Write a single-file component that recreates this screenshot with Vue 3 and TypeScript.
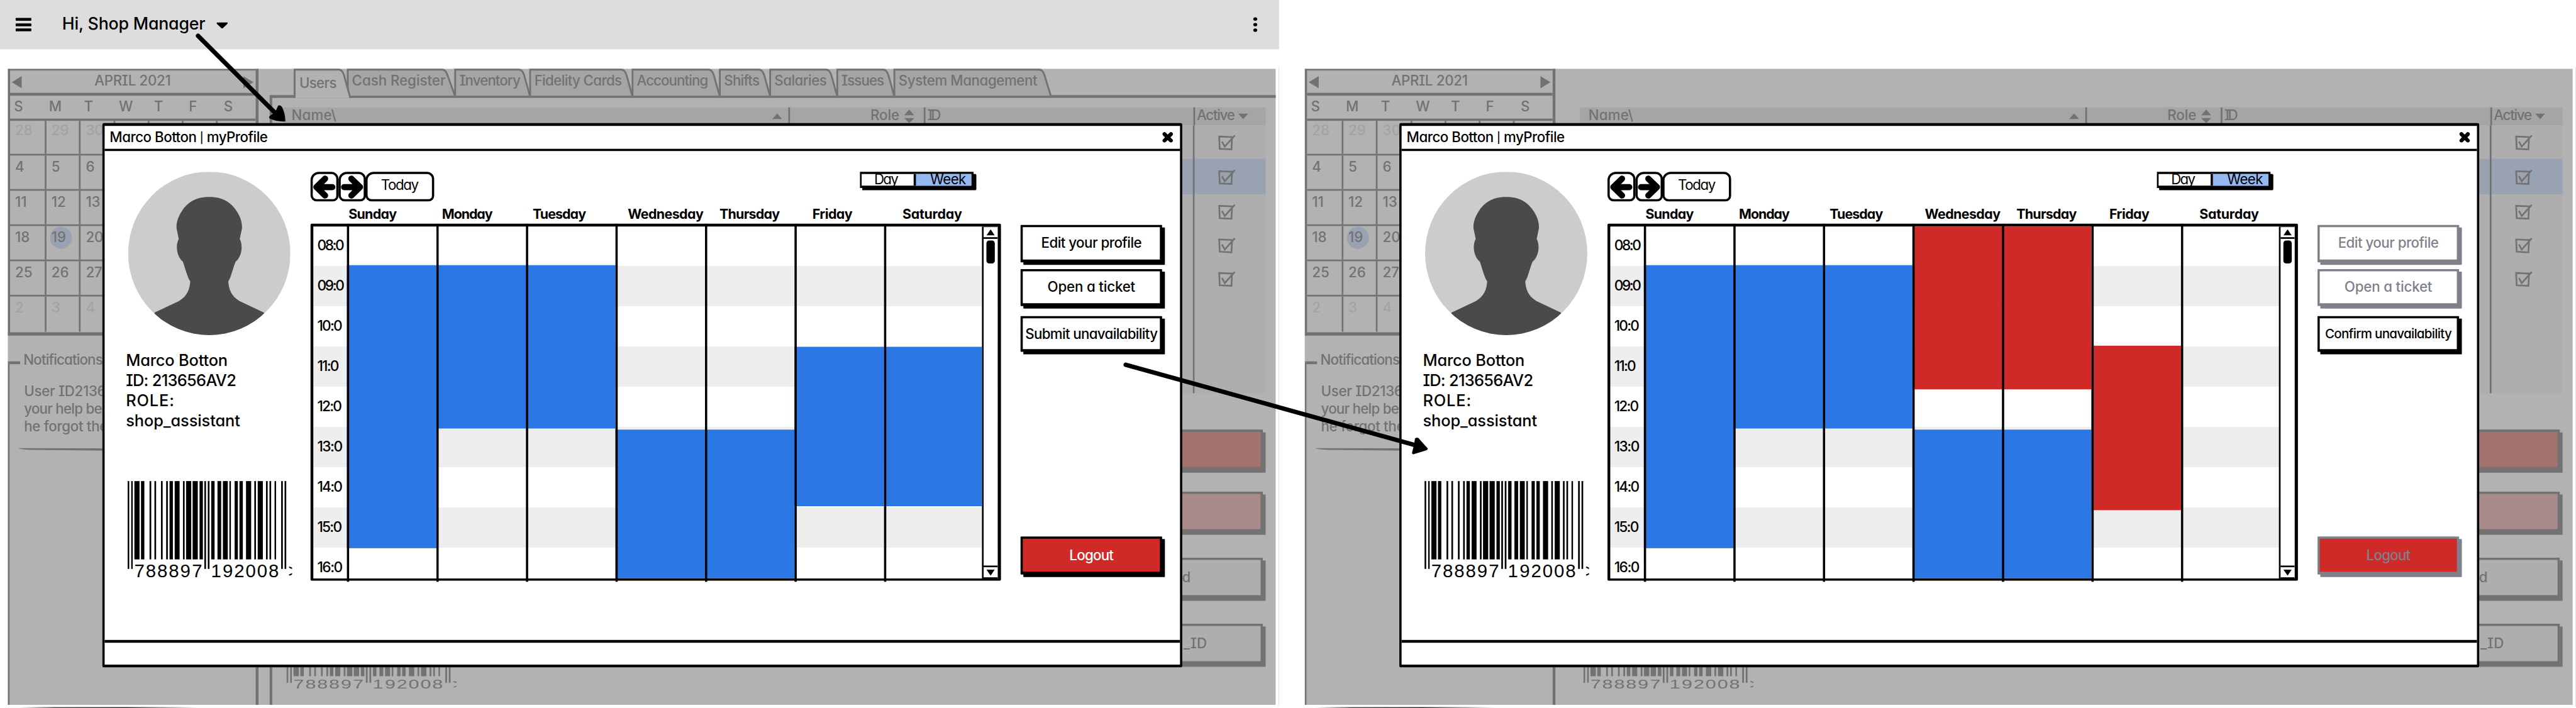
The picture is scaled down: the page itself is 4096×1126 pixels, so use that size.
<script setup lang="ts">
import { type Directive } from 'vue'

type Tone = 'work' | 'away'
interface Block { tone: Tone; top: number; height: number }
interface Day { name: string; indent: number; width: number }
interface Action { label: string; width: number; height: number; gap: number; kind: string; size?: number }
interface Screen { id: string; tabs: boolean; blocks: Block[][]; actions: Action[] }

// Spreads a label's letters so that it takes the given width.
const vFit: Directive<HTMLElement, number | undefined> = {
  mounted(el, { value }) {
    const count = (el.textContent ?? '').length
    if (!value || count < 2) return
    el.style.letterSpacing = `${(value - el.offsetWidth) / (count - 1)}px`
  },
}

const weekdays = ['S', 'M', 'T', 'W', 'T', 'F', 'S']
// Only the first three columns stay clear of the profile window.
const weeks: (number | '')[][] = [
  [28, 29, 30, '', '', '', ''],
  [4, 5, 6, '', '', '', ''],
  [11, 12, 13, '', '', '', ''],
  [18, 19, 20, '', '', '', ''],
  [25, 26, 27, '', '', '', ''],
  [2, 3, 4, '', '', '', ''],
]
const tabs = [
  { label: 'Users', w: 95, text: 67, pad: 10, slope: 14, over: 6 },
  { label: 'Cash Register', w: 192, text: 167, pad: 9, slope: 21, over: 1 },
  { label: 'Inventory', w: 134, text: 109, pad: 9, slope: 18, over: 1 },
  { label: 'Fidelity Cards', w: 183, text: 157, pad: 9, slope: 18, over: 1 },
  { label: 'Accounting', w: 156, text: 128, pad: 9, slope: 18, over: 1 },
  { label: 'Shifts', w: 90, text: 64, pad: 9, slope: 18, over: 1 },
  { label: 'Salaries', w: 120, text: 94, pad: 9, slope: 18, over: 1 },
  { label: 'Issues', w: 102, text: 76, pad: 9, slope: 18, over: 1 },
  { label: 'System Management', w: 281, text: 248, pad: 9, slope: 20, over: 0 },
]
const tabShape = (t: { w: number; slope: number; over: number }, h: number) =>
  `M1.5 ${h}V1.5H${t.w - t.slope}Q${t.w - t.slope + 6} 2 ${t.w - t.slope + 9} 12L${t.w + t.over} ${h}`

const checks = [17, 79, 141, 201, 261]
const days: Day[] = [
  { name: 'Sunday', indent: 0, width: 86 },
  { name: 'Monday', indent: 7, width: 91 },
  { name: 'Tuesday', indent: 9, width: 96 },
  { name: 'Wednesday', indent: 19, width: 136 },
  { name: 'Thursday', indent: 23, width: 108 },
  { name: 'Friday', indent: 29, width: 72 },
  { name: 'Saturday', indent: 30, width: 106 },
]
const hours = [
  { t: '08:0', w: 49 }, { t: '09:0', w: 49 }, { t: '10:0', w: 45 },
  { t: '11:0', w: 39 }, { t: '12:0', w: 45 }, { t: '13:0', w: 46 },
  { t: '14:0', w: 46 }, { t: '15:0', w: 45 }, { t: '16:0', w: 46 },
]
const work = (from: number, to: number): Block => ({ tone: 'work', top: from - 405.5, height: to - from })
const away = (from: number, to: number): Block => ({ tone: 'away', top: from - 405.5, height: to - from })

const screens: Screen[] = [
  {
    id: 'submit',
    tabs: true,
    blocks: [
      [work(474, 980)], [work(474, 766)], [work(474, 766)],
      [work(768, 1034)], [work(768, 1034)], [work(620, 905.5)], [work(620, 905.5)],
    ],
    actions: [
      { label: 'Edit your profile', width: 180, height: 67, gap: 12, kind: '' },
      { label: 'Open a ticket', width: 157, height: 66, gap: 18, kind: '' },
      { label: 'Submit unavailability', width: 237, height: 64, gap: 330, kind: 'snug' },
      { label: 'Logout', width: 79, height: 68, gap: 0, kind: 'danger' },
    ],
  },
  {
    id: 'confirm',
    tabs: false,
    blocks: [
      [work(474, 980)], [work(474, 766)], [work(474, 766)],
      [away(405.5, 696), work(768, 1034)], [away(405.5, 696), work(768, 1034)],
      [away(618, 912)], [],
    ],
    actions: [
      { label: 'Edit your profile', width: 180, height: 67, gap: 12, kind: 'off' },
      { label: 'Open a ticket', width: 157, height: 66, gap: 18, kind: 'off' },
      { label: 'Confirm unavailability', width: 227, height: 64, gap: 330, kind: 'snug', size: 23 },
      { label: 'Logout', width: 79, height: 68, gap: 0, kind: 'danger off' },
    ],
  },
]

// Barcode bars: [x, width, is guard bar]
const bars: [number, number, boolean][] = [
  [0, 3, true], [6.5, 2.7, true], [12.2, 9.2, false], [24, 6, false], [39.3, 3, false],
  [48, 3, false], [59.7, 3, false], [69, 3, false], [75, 6, false], [84.2, 8.8, false],
  [99, 3, false], [104.6, 9.2, false], [116.3, 9.2, false], [128.6, 6, false],
  [137.2, 3, true], [143.4, 3, true], [149.5, 6, false], [160.7, 6.6, false],
  [170.4, 8.7, false], [182, 2.7, false], [191.3, 5.8, false], [200, 6, false],
  [211.7, 9.2, false], [226.5, 3, false], [232.6, 9.2, false], [247.4, 3, false],
  [253.6, 3, false], [262.7, 2.7, false], [274.5, 3, true], [280.6, 3, true],
]
const digits = [
  ['7', 12], ['8', 32.5], ['8', 53], ['8', 73.5], ['9', 94], ['7', 115],
  ['1', 149], ['9', 170], ['2', 190.5], ['0', 211], ['0', 231.5], ['8', 252], ['>', 287],
] as [string, number][]
</script>

<template>
  <div class="viewport">
    <div class="board">
      <header class="topbar">
        <span class="burger"><i /><i /><i /></span>
        <span class="t hello" v-fit="256">Hi, Shop Manager</span>
        <svg class="caret" viewBox="0 0 20 11"><path d="M1 0H19Q21 1 19 3L11 10.500Q10 11 9 10.500L1 3Q-1 1 1 0Z" /></svg>
        <span class="kebab"><i /><i /><i /></span>
      </header>

      <main class="screens">
        <section v-for="s in screens" :key="s.id" class="screen">
          <aside class="side">
            <div class="cal">
              <div class="cal-head">
                <svg class="tri" viewBox="0 0 18 22"><path d="M0 11L18 0V22Z" /></svg>
                <span class="t" v-fit="136">APRIL 2021</span>
                <svg class="tri" viewBox="0 0 18 22"><path d="M18 11L0 0V22Z" /></svg>
              </div>
              <div class="cal-days">
                <span v-for="(d, i) in weekdays" :key="i" class="t">{{ d }}</span>
              </div>
              <div v-for="(w, r) in weeks" :key="r" class="week">
                <span v-for="(n, c) in w" :key="c" class="cell" :class="{ dim: (r === 0 && c < 4) || r === 5 }">
                  <span v-if="n" class="t" :class="{ today: n === 19 }">{{ n }}</span>
                </span>
              </div>
            </div>
            <div class="notes">
              <h4 class="t" v-fit="142">Notifications</h4>
              <p class="t" v-fit="147">User ID2136</p>
              <p class="t" v-fit="140">your help be</p>
              <p class="t" v-fit="150">he forgot the</p>
              <svg class="rule" viewBox="0 0 200 6" preserveAspectRatio="none"><path d="M0 0L200 1V6L30 4Q6 4 0 0Z" /></svg>
            </div>
          </aside>

          <div class="main" :class="{ framed: s.tabs }">
            <nav class="tabs">
              <template v-if="s.tabs">
                <div v-for="(t, i) in tabs" :key="t.label" class="tab" :class="{ active: i === 0 }" :style="{ width: t.w + 'px', paddingLeft: t.pad + 'px' }">
                  <svg class="tab-shape" :width="t.w" height="52"><path :d="tabShape(t, i === 0 ? 52 : 48)" /></svg>
                  <span class="t" v-fit="t.text">{{ t.label }}</span>
                </div>
              </template>
            </nav>
            <div class="table">
              <div class="thead">
                <div class="th name">
                  <span class="t" v-fit="80">Name\</span>
                  <svg class="up" viewBox="0 0 18 10"><path d="M9 0L18 10H0Z" /></svg>
                </div>
                <div class="th role">
                  <span class="t" v-fit="52">Role</span>
                  <svg class="sort" viewBox="0 0 18 24"><path d="M9 0L18 10H0ZM9 24L0 15H18Z" /></svg>
                </div>
                <div class="th id"><span class="t" v-fit="24">ID</span></div>
                <div class="th act">
                  <span class="t" v-fit="68">Active</span>
                  <svg class="up" viewBox="0 0 18 10"><path d="M9 10L0 0H18Z" /></svg>
                </div>
              </div>
              <div class="tbody">
                <div class="picked" />
                <div class="col-active">
                  <svg v-for="y in checks" :key="y" class="check" :style="{ top: y + 'px' }" viewBox="0 0 32 28">
                    <path d="M2 3L25 4L24 26L3 25Z M7 12L12 21L30 1" />
                  </svg>
                </div>
              </div>
            </div>
            <div class="foot">
              <svg class="barcode back" viewBox="0 0 294 175" preserveAspectRatio="none">
                <rect v-for="b in bars" :key="b[0]" :x="b[0]" y="0" :width="b[1]" :height="b[2] ? 157 : 140" />
                <text v-for="d in digits" :key="d[1]" :x="d[1]" y="172">{{ d[0] }}</text>
              </svg>
              <div class="back-actions">
                <span class="back-btn red" />
                <span class="back-btn pink" />
                <span class="back-btn"><span class="t d">d</span></span>
                <span class="back-btn"><span class="t u">_ID</span></span>
              </div>
            </div>
          </div>

          <div class="edge right" />
          <div class="edge bottom" />

          <div class="modal">
            <div class="title">
              <span class="t" v-fit="283">Marco Botton <span class="bar">|</span> myProfile</span>
              <svg class="close" viewBox="0 0 19 18"><path d="M4 3.500L15 14.500M15 3.500L4 14.500" /></svg>
            </div>
            <div class="body">
              <div class="profile">
                <svg class="avatar" viewBox="0 0 290 292">
                  <defs><clipPath :id="'c-' + s.id"><ellipse cx="145" cy="146" rx="145" ry="146" /></clipPath></defs>
                  <ellipse cx="145" cy="146" rx="145" ry="146" fill="#ccc" />
                  <path
                    :clip-path="`url(#c-${s.id})`" fill="#4a4a4a"
                    d="M145 45C172 45 185 57 193 69C201 80 204 92 203.500 101L199.500 120C206 132 203 152 192 161C187 173 184 189 179 196C180 210 184 222 199 231L243 252V292H47V252L91 231C106 222 110 210 111 196C106 189 102 173 98 161C87 152 84 132 90.500 120L86.500 101C86 92 89 80 97 69C105 57 118 45 145 45Z"
                  />
                </svg>
                <div class="who">
                  <span class="t" v-fit="182">Marco Botton</span>
                  <span class="t" v-fit="197">ID: 213656AV2</span>
                  <span class="t" v-fit="86">ROLE:</span>
                  <span class="t" v-fit="204">shop_assistant</span>
                </div>
                <svg class="barcode" viewBox="0 0 294 175">
                  <rect v-for="b in bars" :key="b[0]" :x="b[0]" y="0" :width="b[1]" :height="b[2] ? 157 : 140" />
                  <text v-for="d in digits" :key="d[1]" :x="d[1]" y="172">{{ d[0] }}</text>
                </svg>
              </div>

              <div class="schedule">
                <div class="toolbar">
                  <span class="nav"><svg viewBox="0 0 41 45"><path d="M22 8.500L6.500 23.500L22 38.500M10 23.500H35" /></svg></span>
                  <span class="nav"><svg viewBox="0 0 41 45"><path d="M19 8.500L34.500 23.500L19 38.500M31 23.500H6" /></svg></span>
                  <span class="nav now"><span class="t" v-fit="68">Today</span></span>
                  <span class="toggle">
                    <span class="day"><span class="t" v-fit="43">Day</span></span>
                    <span class="wk"><span class="t" v-fit="64">Week</span></span>
                  </span>
                </div>
                <div class="names">
                  <span v-for="d in days" :key="d.name" :style="{ paddingLeft: d.indent + 'px' }"><b class="t" v-fit="d.width">{{ d.name }}</b></span>
                </div>
                <div class="grid">
                  <div class="times"><span v-for="h in hours" :key="h.t"><span class="t" v-fit="h.w">{{ h.t }}</span></span></div>
                  <div v-for="(d, i) in days" :key="d.name" class="daycol">
                    <div v-for="(b, k) in s.blocks[i]" :key="k" class="block" :class="b.tone" :style="{ top: b.top + 'px', height: b.height + 'px' }" />
                  </div>
                  <div class="scroll">
                    <span class="sb top"><svg viewBox="0 0 15 11"><path d="M7.500 0L15 11H0Z" /></svg></span>
                    <span class="thumb" />
                    <span class="sb bottom"><svg viewBox="0 0 15 11"><path d="M7.500 11L0 0H15Z" /></svg></span>
                  </div>
                </div>
              </div>

              <div class="actions">
                <button
                  v-for="a in s.actions" :key="a.label" class="btn" :class="a.kind"
                  :style="{ height: a.height + 'px', marginBottom: a.gap + 'px', fontSize: (a.size ?? 25) + 'px' }"
                ><span class="t" v-fit="a.width">{{ a.label }}</span></button>
              </div>
            </div>
            <div class="status" />
          </div>
        </section>
      </main>

      <svg class="links" viewBox="0 0 4604 1266">
        <path class="stroke" d="M354 64L494 204" />
        <path d="M497 189Q500 187 504 191Q510 203 510 217Q495 218 482 212Q479 209 484 206L492 200Z" />
        <path class="stroke" d="M2012 652L2530 796" />
        <path d="M2529 784Q2531 781 2535 783L2552 802Q2552 804 2549 805L2526 812Q2523 812 2524 808L2527 796Z" />
      </svg>
    </div>
  </div>
</template>

<style>
body { background: #fff; overflow: hidden; }
</style>

<style scoped>
* { box-sizing: border-box; }
.viewport { width: 4096px; height: 1126px; overflow: hidden; }
.board {
  position: relative; width: 4604px; height: 1266px; overflow: hidden;
  transform: scale(0.88966); transform-origin: 0 0; background: #fff;
  font: 450 25px/1 Inter, "Open Sans", sans-serif; color: #000;
  font-feature-settings: "cv11", "cv08"; font-kerning: normal;
}
.t { display: inline-block; width: max-content; white-space: nowrap; margin: 0; flex: none; }

.topbar { width: 2286px; height: 88px; background: #ddd; display: flex; align-items: center; padding: 0 38px 0 28px; }
.burger { width: 28px; height: 24px; display: flex; flex-direction: column; justify-content: space-between; }
.burger i { height: 5px; background: #000; border-radius: 1px; }
.hello { margin: -4px 0 0 55px; font-size: 30px; }
.caret { width: 20px; height: 11px; margin: 2px 0 0 20px; }
.kebab { margin-left: auto; width: 8px; height: 26px; display: flex; flex-direction: column; justify-content: space-between; }
.kebab i { width: 7px; height: 6px; border-radius: 50%; background: #000; }

.screens { display: flex; gap: 52px; padding: 35px 0 0 14px; }
.screen { position: relative; width: 2266px; height: 1137px; background: #b2b2b2; display: flex; color: #727272; flex: none; }
.side { width: 448px; border-right: 5px solid #727272; flex: none; overflow: hidden; }
.cal { height: 477px; border: 4px solid #727272; border-width: 3px 0 6px 4px; }
.cal-head { height: 40px; display: flex; justify-content: space-between; align-items: center; padding: 0 4px 4px 3px; }
.cal-head .tri { margin-top: 6px; width: 18px; height: 22px; fill: #727272; }
.cal-days { height: 50px; border: solid #727272; border-width: 5px 0 4px; display: flex; align-items: center; padding-left: 7px; padding-bottom: 3px; }
.cal-days .t { width: 62.500px; }
.week { height: 63px; display: flex; border-bottom: 3.500px solid #727272; }
.week:nth-child(3) { height: 62px; }
.week:nth-child(3) .cell { padding-top: 5px; }
.week:last-child { border-bottom: 0; }
.cell { width: 61.300px; border-right: 3.500px solid #727272; padding: 8px 0 0 9px; flex: none; line-height: 25px; }
.cell:first-child { width: 65px; }
.cell:last-child { border-right: 0; }
.dim { color: #a3a3a3; }
.today { position: relative; z-index: 0; }
.today::before { content: ""; position: absolute; z-index: -1; left: -3px; top: -7px; width: 38px; height: 38px; border-radius: 50%; background: #98a2b4; border: 1.500px solid #a9a5a5; }
.notes { margin-top: 46px; height: 614px; border-left: 3.500px solid #727272; padding: 1px 0 0 27px; background: linear-gradient(#727272, #727272) 0 0 / 19px 5px no-repeat; }
.notes h4 { display: block; font-weight: 450; font-size: 25px; margin: -16px 0 28px -2px; line-height: 25px; }
.notes p { display: block; height: 31.500px; line-height: 31.500px; font-size: 25px; margin-left: -1px; }
.rule { display: block; width: 200px; height: 5px; margin: 22px 0 0 -12px; fill: #727272; }

.main { margin-left: 20px; flex: 1; display: flex; flex-direction: column; }
.tabs { height: 52px; display: flex; padding-left: 43px; position: relative; }
.framed .tabs { background: linear-gradient(#727272, #727272) 0 100% / 100% 5px no-repeat; }
.framed { background: linear-gradient(#727272, #727272) 0 50px / 4.500px 100% no-repeat; }
.tab { position: relative; flex: none; height: 48px; padding-top: 9px; line-height: 25px; font-size: 25px; }
.tab.active { padding-top: 13px; z-index: 1; }
.tab-shape { position: absolute; left: 0; top: 0; overflow: visible; z-index: 0; }
.tab-shape path { fill: #a5a5a5; stroke: #727272; stroke-width: 3.200px; }
.tab.active path { fill: #b2b2b2; }
.tab .t { position: relative; }
.table { margin: 17px 18px 0 24px; height: 512px; display: flex; flex-direction: column; }
.thead { height: 32px; background: #a5a5a5; display: flex; }
.th { display: flex; align-items: center; font-size: 25px; border-right: 3.500px solid #727272; padding-bottom: 3px; }
.th svg { fill: #727272; }
.name { width: 906px; padding-left: 15px; justify-content: space-between; padding-right: 11px; }
.up { width: 18px; height: 10px; margin-top: 4px; }
.role { width: 241.500px; justify-content: flex-end; padding-right: 17px; gap: 8px; }
.sort { width: 18px; height: 24px; margin-top: 3px; }
.id { width: 482.500px; padding-left: 4px; }
.act { flex: 1; padding-left: 3px; gap: 7px; border: 0; }
.tbody { position: relative; flex: 1; background: #aeaeae; display: flex; justify-content: flex-end; }
.picked { position: absolute; left: 0; right: 0; top: 60px; height: 63px; background: #98a2b0; }
.col-active { position: relative; width: 130px; border-left: 3.500px solid #727272; }
.check { position: absolute; left: 42px; width: 32px; height: 28px; fill: none; stroke: #727272; stroke-width: 3px; }
.foot { flex: 1; display: flex; justify-content: space-between; align-items: flex-end; padding: 0 23px 27px 30px; }
.barcode { display: block; width: 294px; height: 175px; margin: 90px 0 0 3px; overflow: hidden; }
.barcode text { font: 400 33px "Liberation Sans", Arial, sans-serif; font-feature-settings: normal; }
.barcode.back { width: 304px; height: 121px; margin: 0; fill: #727272; }
.back-actions { display: flex; flex-direction: column; align-self: flex-start; margin-top: 65px; }
.back-btn { width: 480px; height: 72px; border: 4px solid #727272; border-bottom-width: 5px; box-shadow: 5px 5px 0 #727272; background: #aeaeae; margin-bottom: 46px; display: flex; justify-content: flex-end; align-items: center; font-size: 25px; }
.back-btn.red { background: #a4726f; margin-bottom: 39px; }
.back-btn.pink { background: #a98b8b; }
.back-btn .d { margin-right: 125px; }
.back-btn .u { margin-right: 96px; }
.edge { position: absolute; }
.edge.right { left: 2271px; top: -3px; width: 1px; height: 1143px; background: #dcdcdc; }
.edge.bottom { left: 20px; top: 1140.500px; width: 320px; height: 2.500px; background: linear-gradient(90deg, #fff, #555 20%, #333 60%, #aaa 85%, #fff); }

.modal { position: absolute; left: 169px; top: 97px; width: 1930px; height: 973px; border: solid #000; border-width: 5px 4.500px 5px 4px; background: #fff; color: #000; display: flex; flex-direction: column; border-radius: 3px; }
.title { height: 45px; border-bottom: 4.500px solid #000; display: flex; align-items: center; justify-content: space-between; padding: 0 12px 0 9px; }
.title .t { margin-top: -1px; }
.bar { font-size: 19px; vertical-align: 1.500px; }
.close { width: 20px; height: 19px; fill: none; stroke: #000; stroke-width: 6.500px; stroke-linecap: round; }
.body { flex: 1; display: flex; }
.status { height: 44px; border-top: 5px solid #000; }

.profile { width: 368px; padding: 37px 0 0 38px; flex: none; }
.avatar { display: block; width: 290px; height: 292px; margin-left: 4px; }
.who { margin-top: 27px; display: flex; flex-direction: column; font-size: 28.500px; line-height: 36px; }

.schedule { width: 1234px; padding-top: 37px; flex: none; }
.toolbar { display: flex; height: 53px; font-weight: 400; }
.nav { width: 49.500px; height: 53px; border: 4px solid #000; border-radius: 15px 13px 10px 11px; display: flex; align-items: center; justify-content: center; flex: none; }
.nav svg { width: 41px; height: 45px; fill: none; stroke: #000; stroke-width: 11px; stroke-linecap: round; stroke-linejoin: round; }
.now { width: 123px; margin-left: -1.500px; padding-bottom: 4px; }
.toggle { margin-left: 761px; width: 203px; height: 29px; border: solid #000; border-width: 4px 4px 4px 3px; box-shadow: 6px 4px 0 -1px #000, 4px 4px 0 #000; display: flex; font-size: 25px; }
.day { width: 93px; padding: 0 0 2px 23px; display: flex; align-items: center; }
.wk { flex: 1; background: #94b9f2; border-left: 4px solid #000; padding: 0 0 2px 26px; display: flex; align-items: center; }
.names { height: 40px; padding: 5px 0 0 68px; display: flex; }
.names > span { width: 160px; flex: none; line-height: 35px; font-size: 24px; }
.names b { font-weight: 700; }
.grid { height: 638px; border: solid #000; border-width: 5.500px 6px 4px 5.500px; display: flex; background: repeating-linear-gradient(#fff 0 72px, #eee 72px 144px) 0 -1.500px / 100% 720px; border-radius: 2px; }
.times { width: 59.500px; overflow: hidden; flex: none; padding-left: 7px; font-size: 25.500px; }
.times > span { display: block; height: 72px; line-height: 72px; }
.times > span:first-child { margin-top: -3px; }
.daycol { position: relative; width: 160px; flex: none; }
.daycol:nth-child(8) { width: 175px; }
.daycol::after { content: ""; position: absolute; left: 0; top: -5px; bottom: -6px; width: 4px; background: #000; }
.block { position: absolute; left: 0; right: 0; }
.work { background: #2b78e4; }
.away { background: #cf2a27; }
.scroll { flex: 1; border-left: 3px solid #000; background: #fff; display: flex; flex-direction: column; align-items: center; }
.sb { width: 100%; display: flex; align-items: center; justify-content: center; }
.sb svg { width: 15px; height: 11px; }
.sb.top { height: 22px; border-bottom: 3px solid #000; border-top: 1px solid #000; }
.sb.bottom { height: 23px; border-top: 3.500px solid #000; margin-top: auto; border-bottom: 2px solid #000; }
.thumb { width: 15px; height: 41px; margin-top: 3px; border-radius: 5px; background: #000; }

.actions { padding: 131.500px 0 0 35px; display: flex; flex-direction: column; }
.btn { width: 253px; border: solid #000; border-width: 4.500px 4.500px 5.500px 4.500px; box-shadow: 5px 4.500px 0 #000; background: #fff; padding: 0; display: flex; align-items: center; justify-content: center; font: inherit; font-feature-settings: inherit; color: #000; flex: none; border-radius: 1px; }
.snug { padding-top: 2px; }
.danger { background: #cf2a27; color: #fff; }
.off { border-color: #80808b; box-shadow: 5px 4.500px 0 #80808b; color: #80808b; }

.links { position: absolute; left: 0; top: 0; width: 4604px; height: 1266px; pointer-events: none; }
.links .stroke { fill: none; stroke: #000; stroke-width: 8px; stroke-linecap: round; }
</style>
